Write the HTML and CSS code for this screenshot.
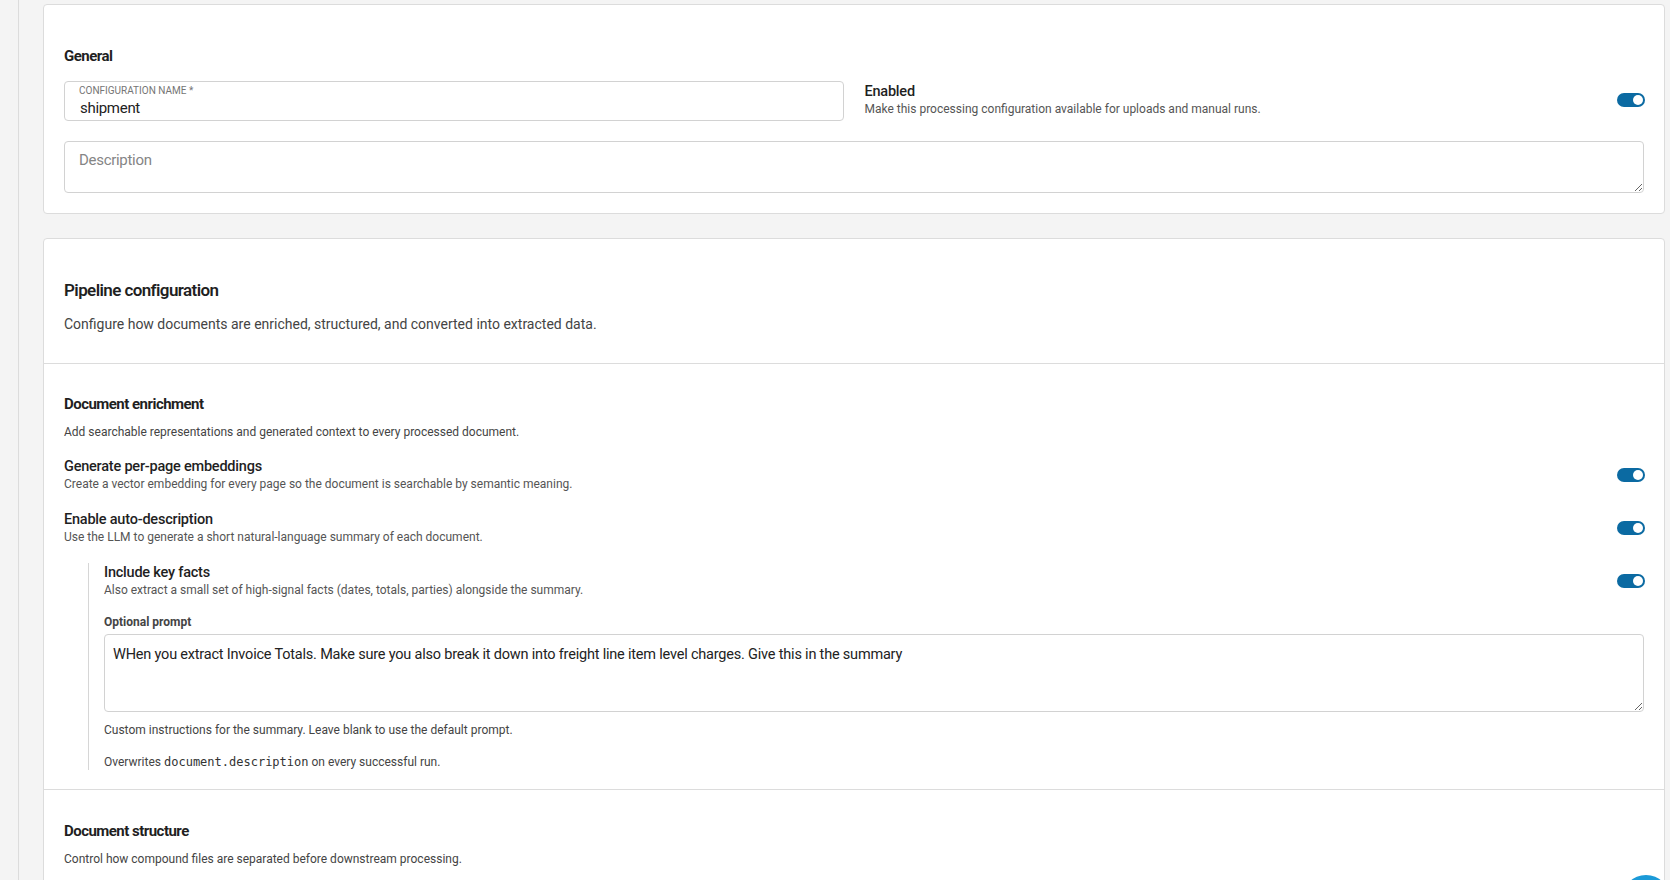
FILE: index.html
```html
<!doctype html>
<html lang="en">
  <head>
    <meta charset="UTF-8" />
    <meta name="viewport" content="width=device-width, initial-scale=1.0" />
    <title>Processing configuration</title>
    <link rel="stylesheet" href="styles.css">
  </head>
  <body>
    <div class="shell">
      <div class="rail"></div>

      <main class="main">
        <!-- General -->
        <section class="card card-general">
          <h3 class="section-title">General</h3>

          <div class="general-row">
            <label class="field">
              <span class="field-label">Configuration name *</span>
              <input class="field-input" type="text" value="shipment" />
            </label>

            <div class="switch-row enabled-row">
              <div class="switch-text">
                <div class="switch-title">Enabled</div>
                <div class="switch-desc">Make this processing configuration available for uploads and manual runs.</div>
              </div>
              <span class="toggle on"></span>
            </div>
          </div>

          <textarea class="desc-area" placeholder="Description"></textarea>
        </section>

        <!-- Pipeline -->
        <section class="card card-pipeline">
          <div class="pipe-head">
            <h2 class="pipe-title">Pipeline configuration</h2>
            <p class="pipe-desc">Configure how documents are enriched, structured, and converted into extracted data.</p>
          </div>

          <div class="pipe-section enrichment">
            <h3 class="section-title">Document enrichment</h3>
            <p class="section-desc">Add searchable representations and generated context to every processed document.</p>

            <div class="switch-row option first">
              <div class="switch-text">
                <div class="switch-title">Generate per-page embeddings</div>
                <div class="switch-desc">Create a vector embedding for every page so the document is searchable by semantic meaning.</div>
              </div>
              <span class="toggle on"></span>
            </div>

            <div class="switch-row option">
              <div class="switch-text">
                <div class="switch-title">Enable auto-description</div>
                <div class="switch-desc">Use the LLM to generate a short natural-language summary of each document.</div>
              </div>
              <span class="toggle on"></span>
            </div>

            <div class="nested">
              <div class="switch-row">
                <div class="switch-text">
                  <div class="switch-title">Include key facts</div>
                  <div class="switch-desc">Also extract a small set of high-signal facts (dates, totals, parties) alongside the summary.</div>
                </div>
                <span class="toggle on"></span>
              </div>

              <div class="prompt-label">Optional prompt</div>
              <textarea class="prompt-area">WHen you extract Invoice Totals. Make sure you also break it down into freight line item level charges. Give this in the summary</textarea>
              <p class="hint">Custom instructions for the summary. Leave blank to use the default prompt.</p>
              <p class="hint hint-last">Overwrites <code>document.description</code> on every successful run.</p>
            </div>
          </div>

          <div class="pipe-section structure">
            <h3 class="section-title">Document structure</h3>
            <p class="section-desc">Control how compound files are separated before downstream processing.</p>
          </div>
        </section>
      </main>
    </div>

    <span class="fab"></span>
  </body>
</html>
```

FILE: styles.css
```css
body {
  margin: 0;
  background: #f4f4f4;
  font-family: Roboto, "Noto Sans", sans-serif;
  color: #1f1f1f;
  height: 880px;
  overflow: hidden;
}

.shell {
  display: flex;
  min-height: 880px;
}

.rail {
  width: 18px;
  flex-shrink: 0;
  border-right: 1px solid #dcdcdc;
}

.main {
  flex: 1;
  padding: 4px 5px 0 24px;
}

.card {
  background: #fff;
  border: 1px solid #dcdcdc;
  border-radius: 4px;
}

.card-general {
  padding: 41px 20px 20px;
}

.card-pipeline {
  margin-top: 24px;
}

.section-title {
  margin: 0;
  font-size: 15px;
  line-height: 20px;
  font-weight: 700;
  letter-spacing: -0.035em;
  color: #1f1f1f;
}

.general-row {
  display: grid;
  grid-template-columns: 1fr 1fr;
  gap: 21px;
  margin-top: 15px;
  align-items: center;
}

.field {
  display: flex;
  flex-direction: column;
  height: 40px;
  box-sizing: border-box;
  border: 1px solid #d2d2d2;
  border-radius: 4px;
  padding: 3px 14px 0 14px;
}

.field-label {
  font-size: 10px;
  line-height: 12px;
  text-transform: uppercase;
  color: #757575;
}

.field-input {
  border: none;
  outline: none;
  padding: 0 0 0 1px;
  margin: 1px 0 0;
  font: inherit;
  font-size: 15px;
  line-height: 20px;
  color: #222;
  letter-spacing: -0.02em;
}

.switch-row {
  display: flex;
  align-items: center;
  justify-content: space-between;
}

.enabled-row {
  padding-bottom: 2px;
}

.switch-title {
  font-size: 14.5px;
  line-height: 18px;
  font-weight: 500;
  letter-spacing: -0.015em;
  color: #1f1f1f;
}

.switch-desc {
  font-size: 12px;
  line-height: 16px;
  color: #555;
}

.toggle {
  position: relative;
  width: 28px;
  height: 14px;
  border-radius: 7px;
  background: #bdbdbd;
  flex-shrink: 0;
  margin-right: -1px;
}

.toggle::after {
  content: "";
  position: absolute;
  top: 2px;
  left: 2px;
  width: 10px;
  height: 10px;
  border-radius: 50%;
  background: #fff;
}

.toggle.on {
  background: #0b6aa2;
}

.toggle.on::after {
  left: 16px;
}

.desc-area {
  display: block;
  width: 100%;
  height: 52px;
  box-sizing: border-box;
  margin-top: 20px;
  border: 1px solid #d2d2d2;
  border-radius: 4px;
  padding: 8px 14px;
  font-family: inherit;
  font-size: 15px;
  line-height: 20px;
  letter-spacing: -0.02em;
  color: #222;
}

.desc-area::placeholder {
  color: #858585;
}

.pipe-head {
  padding: 39px 20px 29px;
  border-bottom: 1px solid #dcdcdc;
}

.pipe-title {
  margin: 0;
  font-size: 17px;
  line-height: 24px;
  font-weight: 600;
  letter-spacing: -0.035em;
}

.pipe-desc {
  margin: 12px 0 0;
  font-size: 14px;
  line-height: 20px;
  color: #444;
}

.pipe-section {
  padding: 30px 20px 20px;
  border-bottom: 1px solid #dcdcdc;
}

.pipe-section.enrichment {
  padding-bottom: 19px;
}

.pipe-section.structure {
  padding-top: 31px;
}

.section-desc {
  margin: 10px 0 0;
  font-size: 12px;
  line-height: 16px;
  color: #444;
}

.option {
  margin-top: 19px;
}

.option.first {
  margin-top: 18px;
}

.nested {
  margin: 18px 0 0 24px;
  padding: 1px 0 0 15px;
  border-left: 1px solid #d6d6d6;
}

.prompt-label {
  margin-top: 16px;
  font-size: 12px;
  line-height: 16px;
  font-weight: 700;
  color: #444;
}

.prompt-area {
  display: block;
  width: 100%;
  height: 78px;
  box-sizing: border-box;
  margin-top: 4px;
  border: 1px solid #d2d2d2;
  border-radius: 4px;
  padding: 10px 8px;
  font-family: inherit;
  font-size: 14.5px;
  line-height: 20px;
  letter-spacing: -0.2px;
  color: #222;
  resize: vertical;
}

.hint {
  margin: 10px 0 0;
  font-size: 12px;
  line-height: 16px;
  color: #444;
}

.hint-last {
  margin-top: 16px;
}

.hint code {
  font-family: "DejaVu Sans Mono", "Liberation Mono", monospace;
  font-size: 12px;
  color: #333;
}

.fab {
  position: fixed;
  left: 1622px;
  top: 875px;
  width: 48px;
  height: 48px;
  border-radius: 50%;
  background: #1b9ad8;
}
```
